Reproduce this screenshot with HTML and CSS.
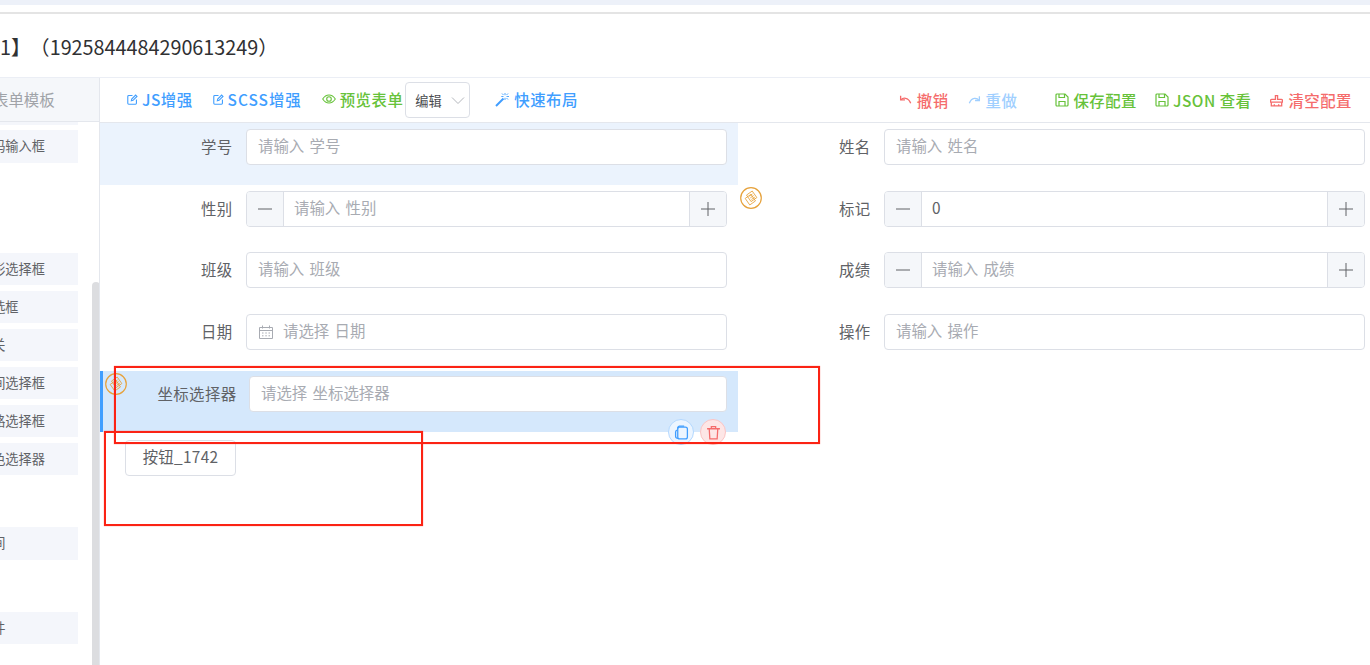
FILE: index.html
```html
<!DOCTYPE html>
<html lang="zh-CN">
<head>
<meta charset="utf-8">
<title>表单设计</title>
<link rel="stylesheet" href="styles.css">
</head>
<body>
<div class="page">
  <div class="top-band"></div>
  <div class="top-line"></div>
  <h1 class="title">1】<span class="title-id">（1925844484290613249）</span></h1>
  <div class="workspace">
    <aside class="sidebar">
      <div class="side-head"><span>表单模板</span></div>
      <div class="side-list">
        <div class="side-item side-cut"></div>
        <div class="side-item"><span>编码输入框</span></div>
        <div class="side-item gap-a"><span>图形选择框</span></div>
        <div class="side-item"><span>多选框</span></div>
        <div class="side-item"><span>开关</span></div>
        <div class="side-item"><span>时间选择框</span></div>
        <div class="side-item"><span>线路选择框</span></div>
        <div class="side-item"><span>颜色选择器</span></div>
        <div class="side-item gap-b"><span>时间</span></div>
        <div class="side-item gap-c"><span>文件</span></div>
      </div>
      <div class="scroll-thumb"></div>
    </aside>
    <main class="main">
      <div class="toolbar">
        <div class="tool-group">
          <a class="tool blue"><svg class="ico" viewBox="0 0 14 14"><path d="M7 2H2.200A1.200 1.200 0 0 0 1 3.200v8.600A1.200 1.200 0 0 0 2.200 13h8.600a1.200 1.200 0 0 0 1.200-1.200V7"/><path d="M5.500 8.600l.5-2.200L11 1.400l1.700 1.700-5 5z"/></svg>JS增强</a>
          <a class="tool blue tool-scss"><svg class="ico" viewBox="0 0 14 14"><path d="M7 2H2.200A1.200 1.200 0 0 0 1 3.200v8.600A1.200 1.200 0 0 0 2.200 13h8.600a1.200 1.200 0 0 0 1.200-1.200V7"/><path d="M5.500 8.600l.5-2.200L11 1.400l1.700 1.700-5 5z"/></svg>SCSS增强</a>
          <a class="tool green eye"><svg class="ico ico-wide" viewBox="0 0 14 14"><path d="M.7 7C2.400 4.300 4.500 3 7 3s4.600 1.300 6.300 4C11.600 9.700 9.500 11 7 11S2.400 9.700.7 7z"/><circle cx="7" cy="7" r="2.300"/></svg>预览表单</a>
          <div class="mode-select"><span>编辑</span><svg class="chevron" viewBox="0 0 14 14"><path d="M1 4.500l6 6 6-6"/></svg></div>
          <a class="tool blue stick"><svg class="ico ico-stick" viewBox="0 0 15 15"><path class="thick" d="M1 14L8.500 6.500"/><path d="M10 1v2.200M10 5.800V8M6.300 4.500h2.200M11.500 4.500h2.500M13 1.500l-1.500 1.500M7 1.500l1.500 1.500M13 7.500L11.500 6"/></svg>快速布局</a>
        </div>
        <div class="tool-group tool-group-right">
          <a class="tool red"><svg class="ico ico-arrow" viewBox="0 0 12 12"><path d="M1.500 1.500v4h4"/><path d="M1.800 5.300C3.500 3.500 8.500 2.500 10.800 8.500"/></svg>撤销</a>
          <a class="tool faint nudge"><svg class="ico ico-arrow" viewBox="0 0 12 12"><path d="M10.500 2v4h-4"/><path d="M10.200 5.800C8.500 3.500 3.500 2.500 1.200 8.500"/></svg>重做</a>
          <a class="tool green wide-gap"><svg class="ico ico-save" viewBox="0 0 14 14"><path d="M2 1h8l3 3v8a1 1 0 0 1-1 1H2a1 1 0 0 1-1-1V2a1 1 0 0 1 1-1z"/><path d="M4 1v3.500h5.500V1M4 13V8.500h6V13"/></svg>保存配置</a>
          <a class="tool green"><svg class="ico ico-save" viewBox="0 0 14 14"><path d="M2 1h8l3 3v8a1 1 0 0 1-1 1H2a1 1 0 0 1-1-1V2a1 1 0 0 1 1-1z"/><path d="M4 1v3.500h5.500V1M4 13V8.500h6V13"/></svg>JSON 查看</a>
          <a class="tool red nudge"><svg class="ico ico-arrow" viewBox="0 0 12 12"><path d="M5 1.500h2v3.500h3.500a1 1 0 0 1 1 1v1.500H.5V6a1 1 0 0 1 1-1H5z"/><path d="M1.200 7.500v3.500h9.600V7.500M4 9.500V11M8 9.500V11"/></svg>清空配置</a>
        </div>
      </div>
      <div class="canvas">
        <div class="form-grid">
          <div class="row row-hover"><label class="lbl">学号</label><div class="field"><input class="inp" placeholder="请输入 学号"></div></div>
          <div class="row"><label class="lbl">姓名</label><div class="field"><input class="inp" placeholder="请输入 姓名"></div></div>

          <div class="row">
            <label class="lbl">性别</label>
            <div class="field"><span class="step step-l"><svg viewBox="0 0 14 14"><path d="M0 7h14"/></svg></span><input class="inp inp-num" placeholder="请输入 性别"><span class="step step-r"><svg viewBox="0 0 14 14"><path d="M0 7h14M7 0v14"/></svg></span></div>
            <span class="tpl-badge tpl-side"><svg viewBox="0 0 22 22"><circle class="tpl-ring" cx="11" cy="11" r="10.300"/><g transform="rotate(-35 11 11)"><rect x="6" y="8" width="7" height="8"/><rect x="9" y="6" width="7" height="8"/><path d="M10.500 8.500h4M10.500 10.500h4M10.500 12.500h4"/></g></svg></span>
          </div>
          <div class="row">
            <label class="lbl">标记</label>
            <div class="field"><span class="step step-l"><svg viewBox="0 0 14 14"><path d="M0 7h14"/></svg></span><input class="inp inp-num" value="0"><span class="step step-r"><svg viewBox="0 0 14 14"><path d="M0 7h14M7 0v14"/></svg></span></div>
          </div>

          <div class="row"><label class="lbl">班级</label><div class="field"><input class="inp" placeholder="请输入 班级"></div></div>
          <div class="row">
            <label class="lbl">成绩</label>
            <div class="field"><span class="step step-l"><svg viewBox="0 0 14 14"><path d="M0 7h14"/></svg></span><input class="inp inp-num" placeholder="请输入 成绩"><span class="step step-r"><svg viewBox="0 0 14 14"><path d="M0 7h14M7 0v14"/></svg></span></div>
          </div>

          <div class="row">
            <label class="lbl">日期</label>
            <div class="field date-field">
              <svg class="cal" viewBox="0 0 14 14"><path d="M.5 2.500h13v11H.5zM.5 5.500h13M3.500.5v3M10.500.5v3"/><path d="M3 8h1.500M6.300 8h1.500M9.500 8H11M3 10.800h1.500M6.300 10.800h1.500M9.500 10.800H11"/></svg>
              <input class="inp inp-date" placeholder="请选择 日期">
            </div>
          </div>
          <div class="row"><label class="lbl">操作</label><div class="field"><input class="inp" placeholder="请输入 操作"></div></div>

          <div class="row row-active">
            <span class="tpl-badge tpl-active"><svg viewBox="0 0 22 22"><circle class="tpl-ring" cx="11" cy="11" r="10.300"/><g transform="rotate(-35 11 11)"><rect x="6" y="8" width="7" height="8"/><rect x="9" y="6" width="7" height="8"/><path d="M10.500 8.500h4M10.500 10.500h4M10.500 12.500h4"/></g></svg></span>
            <label class="lbl lbl-active">坐标选择器</label>
            <div class="field"><input class="inp" placeholder="请选择 坐标选择器"></div>
            <span class="round round-copy"><svg viewBox="0 0 14 14"><rect x="3.500" y="2" width="9" height="11" rx="1.800"/><path d="M3.500 3.500A2 2 0 0 1 5 1h4.500M3.500 4.500C2 4.800 1.500 5.500 1.500 6.500v4C1.500 11.500 2.500 12.500 3.800 12.500"/></svg></span>
            <span class="round round-del"><svg viewBox="0 0 14 14"><path d="M1 3.500h12M5 3.500V1.500h4v2M3 3.500l.6 9.500h6.800l.6-9.500"/></svg></span>
          </div>
        </div>
        <button class="btn" type="button">按钮_1742</button>
      </div>
    </main>
  </div>
  <div class="mark mark-a"></div>
  <div class="mark mark-b"></div>
</div>
</body>
</html>
```
FILE: styles.css
```css
* { box-sizing: border-box; }
html, body { margin: 0; height: 100%; overflow: hidden; background: #fff; }
body, input, button {
  font-family: "Noto Sans CJK SC", "Noto Sans", sans-serif;
  font-size: 15.4px;
}
.page { position: relative; width: 1370px; height: 665px; overflow: hidden; display: flex; flex-direction: column; color: #606266; }
.top-band { height: 5px; background: #edf1f9; flex: none; }
.top-line { height: 2px; margin-top: 7px; background: #e4e4e4; flex: none; }
.title {
  flex: none; height: 64px; margin: 0; line-height: 65px;
  font-size: 19.8px; font-weight: 400; color: #303133; white-space: nowrap;
  border-bottom: 1px solid #ebeef5;
}
.title-id { margin-left: 9px; }
.workspace { flex: 1; min-height: 0; display: flex; }

/* Sidebar */
.sidebar { position: relative; flex: none; width: 100px; border-right: 1px solid #e4e7ed; overflow: hidden; }
.side-head {
  height: 44px; background: #f5f7fa; border-bottom: 1px solid #e4e7ed; padding-bottom: 2px;
  display: flex; align-items: center; color: #a0a3a8; white-space: nowrap; overflow: hidden;
}
.side-head span { margin-left: -7px; }
.side-item {
  width: 78px; height: 32.6px; margin-bottom: 5.4px; background: #f4f6fb;
  font-size: 13.2px; line-height: 32px; white-space: nowrap; overflow: hidden;
}
.side-item span { display: block; margin-left: -21px; }
.side-cut { height: 3px; margin-bottom: 5px; }
.gap-a { margin-top: 90px; }
.gap-b { margin-top: 52px; }
.gap-c { margin-top: 52px; }
.scroll-thumb {
  position: absolute; left: 92px; top: 204px; bottom: 0; width: 8px;
  background: #dcdde0; border-radius: 4px 4px 0 0;
}

/* Toolbar */
.main { flex: 1; min-width: 0; overflow: hidden; }
.toolbar {
  height: 45px; border-bottom: 1px solid #e4e7ed; padding: 0 18px 0 27px;
  display: flex; align-items: center; justify-content: space-between;
}
.tool-group { display: flex; align-items: center; gap: 20px; }
.tool-group-right { gap: 18px; }
.tool { display: flex; align-items: center; gap: 4px; white-space: nowrap; line-height: 24px; letter-spacing: .5px; font-weight: 500; }
.tool-group:first-child .tool { padding-bottom: 2px; }
.tool-scss { letter-spacing: 1px; }
.blue { color: #409eff; }
.green { color: #67c23a; }
.red { color: #f56c6c; }
.faint { color: #a0cfff; }
.nudge { margin-left: 1px; }
.wide-gap { margin-left: 20px; }
.eye { margin-right: -18px; }
.stick { margin-left: 5px; }
.ico { width: 11px; height: 11px; flex: none; fill: none; stroke: currentColor; stroke-width: 1.400; }
.ico-wide { width: 14px; height: 14px; stroke-width: 1.100; }
.ico-stick { width: 15px; height: 15px; stroke-width: .9; }
.ico-arrow { width: 13px; height: 13px; margin-right: 1px; stroke-width: 1.200; }
.ico-save { width: 14px; height: 14px; stroke-width: 1.200; }
.thick { stroke-width: 2; }
.mode-select {
  width: 65px; height: 36px; border: 1px solid #dcdfe6; border-radius: 4px;
  display: flex; align-items: center; justify-content: space-between; padding: 0 4px 0 9px;
  font-size: 13.2px; color: #4a4c50; background: #fff;
}
.chevron { width: 14px; height: 14px; fill: none; stroke: #b4b7bd; stroke-width: 1; }

/* Form */
.canvas { width: 1276px; }
.form-grid { display: grid; grid-template-columns: 638px 638px; grid-template-rows: 62px 61px 62px 63px 61px; }
.row { position: relative; display: flex; align-items: flex-start; gap: 14px; padding: 6px 11px 0 0; }
.row-hover { background: #ebf3fd; }
.row-active { background: #d5e8fc; border-left: 3px solid #409eff; padding-top: 5px; gap: 13px; }
.lbl { flex: none; width: 132.5px; margin-right: -.5px; text-align: right; line-height: 35px; letter-spacing: .4px; }
.lbl-active { width: 133.5px; }
.field {
  flex: 1; min-width: 0; height: 36px; display: flex; align-items: stretch;
  border: 1px solid #dcdfe6; border-radius: 4px; background: #fff; overflow: hidden;
}
.inp {
  flex: 1; min-width: 0; height: 100%; border: 0; outline: 0; padding: 0 11px 4px; background: transparent; color: #606266; word-spacing: 2px;
}
.inp::placeholder { color: #a8abb2; opacity: 1; }
.inp-num { padding: 0 10px 4px; }
.inp-date { padding: 0 10px 4px; }
.date-field { align-items: center; padding-left: 12px; }
.cal { width: 14px; height: 14px; flex: none; fill: none; stroke: #a8abb2; stroke-width: 1; }
.step {
  flex: none; width: 37px; background: #f5f7fa; display: flex; align-items: center; justify-content: center;
}
.step svg { width: 14px; height: 14px; fill: none; stroke: #606266; stroke-width: 1; }
.step-l { border-right: 1px solid #dcdfe6; }
.step-r { border-left: 1px solid #dcdfe6; }
.btn {
  display: block; width: 111px; height: 36px; margin: 8px 0 0 25px; padding: 0 0 5px;
  border: 1px solid #dcdfe6; border-radius: 4px; background: #fff; color: #606266; letter-spacing: .3px;
}

/* Overlays */
.tpl-badge { position: absolute; width: 22px; height: 22px; }
.tpl-badge svg { display: block; width: 22px; height: 22px; fill: none; stroke: #e6a23c; stroke-width: .8; }
.tpl-ring { stroke-width: 1.200; }
.tpl-side { left: 640px; top: 2px; }
.tpl-active { left: 2px; top: 2px; }
.round { position: absolute; top: 48px; width: 26px; height: 26px; border-radius: 50%; display: flex; align-items: center; justify-content: center; }
.round svg { width: 15px; height: 15px; fill: none; stroke-width: 1.200; }
.round-copy { left: 565px; background: #ecf5ff; border: 1px solid #b3d8ff; }
.round-copy svg { stroke: #409eff; }
.round-del { left: 597px; background: #fde6e6; border: 1px solid #fbc4c4; }
.round-del svg { stroke: #f56c6c; }
.mark { position: absolute; border: 2px solid #fb2314; box-shadow: 0 0 1px rgba(251, 35, 20, .6); pointer-events: none; }
.mark-a { left: 114px; top: 366px; width: 706px; height: 78px; }
.mark-b { left: 104px; top: 431px; width: 319px; height: 95px; }
```
